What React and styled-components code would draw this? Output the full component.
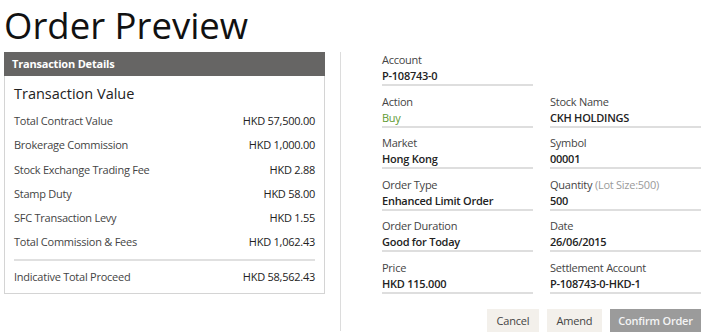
import React from "react";
import styled, { createGlobalStyle } from "styled-components";

const Global = createGlobalStyle`
  html, body { margin: 0; padding: 0; background: #fff; }
  body { font-family: "Open Sans", "Noto Sans", Arial, sans-serif; color: #333; }
`;

const Page = styled.div`
  width: 705px;
  height: 335px;
  box-sizing: border-box;
  padding: 0 4px;
  overflow: hidden;
`;

const Title = styled.h1`
  margin: 0;
  font-size: 36.5px;
  font-weight: 400;
  line-height: 50px;
  height: 52px;
  color: #111;
`;

const Main = styled.div`
  display: flex;
  align-items: flex-start;
`;

const Card = styled.section`
  width: 321px;
  box-sizing: border-box;
  border: 1px solid #d4d4d4;
  border-top: none;
  flex-shrink: 0;
`;

const CardHeader = styled.div`
  height: 24px;
  line-height: 24px;
  background: #666564;
  color: #fff;
  font-size: 11px;
  font-weight: 700;
  padding: 0 8px;
  margin: 0 -1px;
  letter-spacing: -0.2px;
`;

const CardBody = styled.div`
  padding: 8px 9px 4px 9px;
`;

const Heading = styled.h2`
  margin: 0 0 5px;
  font-size: 14.5px;
  font-weight: 400;
  line-height: 20px;
  color: #222;
`;

const Row = styled.div`
  display: flex;
  justify-content: space-between;
  height: 24.3px;
  line-height: 24px;
  font-size: 11px;
  letter-spacing: -0.25px;
  color: #444;
`;

const Value = styled.span`
  color: #222;
`;

const Divider = styled.hr`
  border: none;
  height: 2px;
  background: #e0e0e0;
  margin: 4px 0 4px;
`;

const Right = styled.div`
  margin-left: 15px;
  border-left: 1px solid #dcdcdc;
  padding-left: 41px;
  height: 279px;
  box-sizing: border-box;
  flex: 1;
  display: flex;
  flex-direction: column;
`;

const Grid = styled.div`
  display: grid;
  grid-template-columns: 151px 151px;
  column-gap: 17px;
  row-gap: 7.6px;
`;

const Field = styled.div`
  grid-column: ${(p) => p.$col};
  border-bottom: 2px solid #dedede;
  font-size: 11px;
  letter-spacing: -0.25px;
`;

const Label = styled.div`
  line-height: 16px;
  color: #444;
`;

const Muted = styled.span`
  color: #9a9a9a;
`;

const FieldValue = styled.div`
  line-height: 16px;
  color: ${(p) => (p.$buy ? "#5f9a32" : "#222")};
  font-weight: ${(p) => (p.$buy ? 400 : 600)};
`;

const Buttons = styled.div`
  display: flex;
  justify-content: flex-end;
  gap: 8px;
  margin-top: 15px;
`;

const Button = styled.button`
  height: 23px;
  border: none;
  padding: 0;
  width: ${(p) => p.$w}px;
  font-family: inherit;
  font-size: 11px;
  letter-spacing: -0.2px;
  background: ${(p) => (p.$primary ? "#9b9b9b" : "#f3f0eb")};
  color: ${(p) => (p.$primary ? "#f4f4f4" : "#444")};
  font-weight: ${(p) => (p.$primary ? 600 : 400)};
  cursor: pointer;
`;

const costs = [
  ["Total Contract Value", "HKD 57,500.00"],
  ["Brokerage Commission", "HKD 1,000.00"],
  ["Stock Exchange Trading Fee", "HKD 2.88"],
  ["Stamp Duty", "HKD 58.00"],
  ["SFC Transaction Levy", "HKD 1.55"],
  ["Total Commission & Fees", "HKD 1,062.43"],
];

const fields = [
  { col: 1, label: "Account", value: "P-108743-0" },
  { col: 1, label: "Action", value: "Buy", buy: true },
  { col: 2, label: "Stock Name", value: "CKH HOLDINGS" },
  { col: 1, label: "Market", value: "Hong Kong" },
  { col: 2, label: "Symbol", value: "00001" },
  { col: 1, label: "Order Type", value: "Enhanced Limit Order" },
  { col: 2, label: "Quantity", extra: " (Lot Size:500)", value: "500" },
  { col: 1, label: "Order Duration", value: "Good for Today" },
  { col: 2, label: "Date", value: "26/06/2015" },
  { col: 1, label: "Price", value: "HKD 115.000" },
  { col: 2, label: "Settlement Account", value: "P-108743-0-HKD-1" },
];

export default function App() {
  return (
    <Page>
      <Global />
      <Title>Order Preview</Title>
      <Main>
        <Card>
          <CardHeader>Transaction Details</CardHeader>
          <CardBody>
            <Heading>Transaction Value</Heading>
            {costs.map(([k, v]) => (
              <Row key={k}>
                <span>{k}</span>
                <Value>{v}</Value>
              </Row>
            ))}
            <Divider />
            <Row>
              <span>Indicative Total Proceed</span>
              <Value>HKD 58,562.43</Value>
            </Row>
          </CardBody>
        </Card>
        <Right>
          <Grid>
            {fields.map((f) => (
              <Field key={f.label} $col={f.col}>
                <Label>
                  {f.label}
                  {f.extra && <Muted>{f.extra}</Muted>}
                </Label>
                <FieldValue $buy={f.buy}>{f.value}</FieldValue>
              </Field>
            ))}
          </Grid>
          <Buttons>
            <Button $w={52}>Cancel</Button>
            <Button $w={55}>Amend</Button>
            <Button $primary $w={91}>Confirm Order</Button>
          </Buttons>
        </Right>
      </Main>
    </Page>
  );
}
